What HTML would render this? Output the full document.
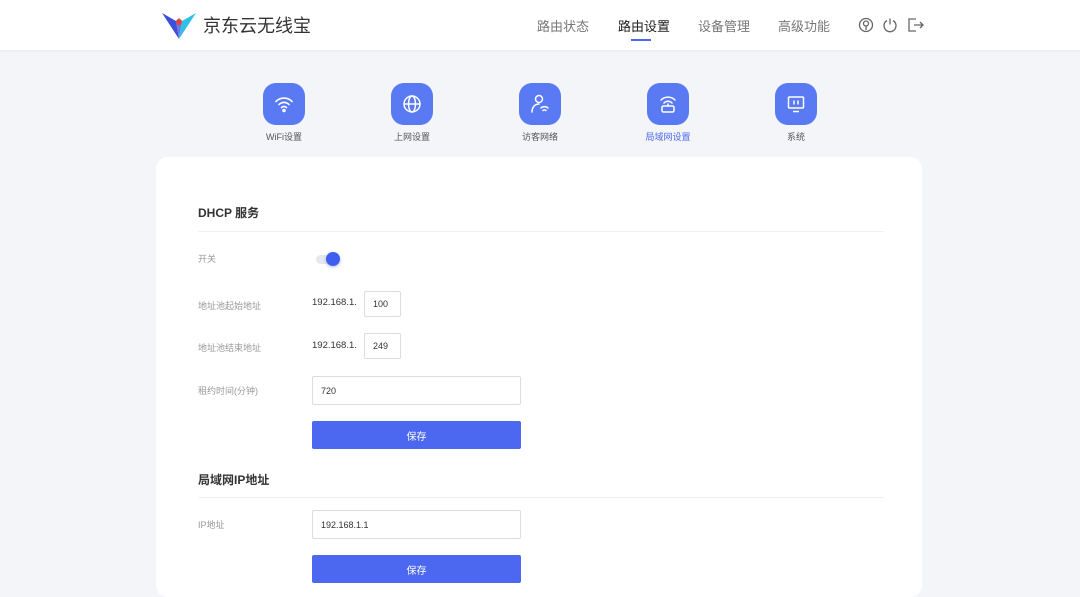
<!DOCTYPE html>
<html><head><meta charset="utf-8"><style>
*{margin:0;padding:0;box-sizing:border-box}
body{width:1080px;height:588px;overflow:hidden;background:#f4f5f9;font-family:"Liberation Sans","Noto Sans CJK SC",sans-serif;position:relative;color:#333}
.a{position:absolute}
.hdr{left:0;top:0;width:1080px;height:50px;background:#fff;box-shadow:0 1px 3px rgba(0,0,0,.05)}
.nav{top:16px;font-size:13px;color:#777}
.ic{width:42px;height:42px;border-radius:13px;background:#5a7af4;top:83px;display:flex;align-items:center;justify-content:center}
.lb{top:130px;font-size:9px;color:#555;width:100px;text-align:center}
.card{left:156px;top:157px;width:766px;height:440px;background:#fff;border-radius:12px}
.h{font-size:12px;font-weight:bold;color:#333;left:198px}
.line{left:198px;width:686px;height:1px;background:#eef0f3}
.l{left:198px;font-size:9px;color:#999}
.in{border:1px solid #ddd;border-radius:2px;background:#fff;font-size:9px;color:#333;padding-left:8px;display:flex;align-items:center}
.btn{left:312px;width:209px;height:28px;background:#4c68f0;border-radius:2px;color:#fff;font-size:10px;display:flex;align-items:center;justify-content:center}
.t{font-size:9.5px;color:#333}
</style></head><body>
<div class="a hdr"></div>
<svg class="a" style="left:161px;top:11px" width="36" height="30" viewBox="0 0 36 30">
<path d="M1 2 L15 10 L18 28 Z" fill="#3b4fd8"/><path d="M35 2 L21 10 L18 28 Z" fill="#2fc0e6"/><path d="M15 10 L18 7 L21 10 L18 28 Z" fill="#6a7be8"/><circle cx="18" cy="11" r="3" fill="#e0443a"/></svg>
<div class="a" style="left:203px;top:12px;font-size:18px;color:#333">京东云无线宝</div>
<div class="a nav" style="left:537px">路由状态</div>
<div class="a nav" style="left:618px;color:#222">路由设置</div>
<div class="a" style="left:631px;top:39px;width:20px;height:2px;background:#4c68f0"></div>
<div class="a nav" style="left:698px">设备管理</div>
<div class="a nav" style="left:778px">高级功能</div>
<svg class="a" style="left:858px;top:17px" width="68" height="16" viewBox="0 0 68 16" fill="none" stroke="#666" stroke-width="1.3">
<circle cx="8" cy="8" r="6.5"/><circle cx="8" cy="6.5" r="2.5"/><path d="M8 9v4"/>
<path d="M29 3.5a6 6 0 1 0 6 0M32 1.5v6"/>
<path d="M58 2h-7v12h7M56 8h9M62 5l3 3-3 3"/></svg>

<div class="a ic" style="left:263px"><svg width="22" height="22" viewBox="0 0 22 22" fill="none" stroke="#fff" stroke-width="1.6" stroke-linecap="round"><path d="M3 8.5a11 11 0 0 1 16 0M6 11.5a7 7 0 0 1 10 0M8.5 14.5a3.5 3.5 0 0 1 5 0"/><circle cx="11" cy="17.5" r="1" fill="#fff"/></svg></div>
<div class="a ic" style="left:391px"><svg width="22" height="22" viewBox="0 0 22 22" fill="none" stroke="#fff" stroke-width="1.5"><circle cx="11" cy="11" r="8"/><ellipse cx="11" cy="11" rx="3.5" ry="8"/><path d="M3 11h16"/></svg></div>
<div class="a ic" style="left:519px"><svg width="22" height="22" viewBox="0 0 22 22" fill="none" stroke="#fff" stroke-width="1.5" stroke-linecap="round"><circle cx="10" cy="6" r="3.5"/><path d="M3 19c0-5 3-8 7-8"/><path d="M12 15a5 5 0 0 1 7 0M14 17.5a2 2 0 0 1 3 0"/></svg></div>
<div class="a ic" style="left:647px"><svg width="22" height="22" viewBox="0 0 22 22" fill="none" stroke="#fff" stroke-width="1.5" stroke-linecap="round"><path d="M4 7a10 10 0 0 1 14 0M7 10a5.5 5.5 0 0 1 8 0"/><rect x="5" y="13" width="12" height="6" rx="1.5"/><path d="M11 11v2"/></svg></div>
<div class="a ic" style="left:775px"><svg width="22" height="22" viewBox="0 0 22 22" fill="none" stroke="#fff" stroke-width="1.5"><rect x="3.5" y="4" width="15" height="11" rx="1"/><path d="M9 7.5v4M13 7.5v4M8 18.5h6"/></svg></div>
<div class="a lb" style="left:234px">WiFi设置</div>
<div class="a lb" style="left:362px">上网设置</div>
<div class="a lb" style="left:490px">访客网络</div>
<div class="a lb" style="left:618px;color:#4c68f0">局域网设置</div>
<div class="a lb" style="left:746px">系统</div>

<div class="a card"></div>
<div class="a h" style="top:204px">DHCP 服务</div>
<div class="a line" style="top:231px"></div>
<div class="a l" style="top:252px">开关</div>
<div class="a" style="left:316px;top:255px;width:24px;height:9px;border-radius:5px;background:#e6e8ee"></div>
<div class="a" style="left:326px;top:252px;width:14px;height:14px;border-radius:50%;background:#3f5ff0;box-shadow:0 1px 3px rgba(60,90,240,.4)"></div>
<div class="a l" style="top:299px">地址池起始地址</div>
<div class="a t" style="left:312px;top:297px">192.168.1.</div>
<div class="a in" style="left:364px;top:291px;width:37px;height:26px">100</div>
<div class="a l" style="top:341px">地址池结束地址</div>
<div class="a t" style="left:312px;top:340px">192.168.1.</div>
<div class="a in" style="left:364px;top:333px;width:37px;height:26px">249</div>
<div class="a l" style="top:384px">租约时间(分钟)</div>
<div class="a in" style="left:312px;top:376px;width:209px;height:29px">720</div>
<div class="a btn" style="top:421px">保存</div>
<div class="a h" style="top:471px">局域网IP地址</div>
<div class="a line" style="top:497px"></div>
<div class="a l" style="top:518px">IP地址</div>
<div class="a in" style="left:312px;top:510px;width:209px;height:29px">192.168.1.1</div>
<div class="a btn" style="top:555px">保存</div>
</body></html>
